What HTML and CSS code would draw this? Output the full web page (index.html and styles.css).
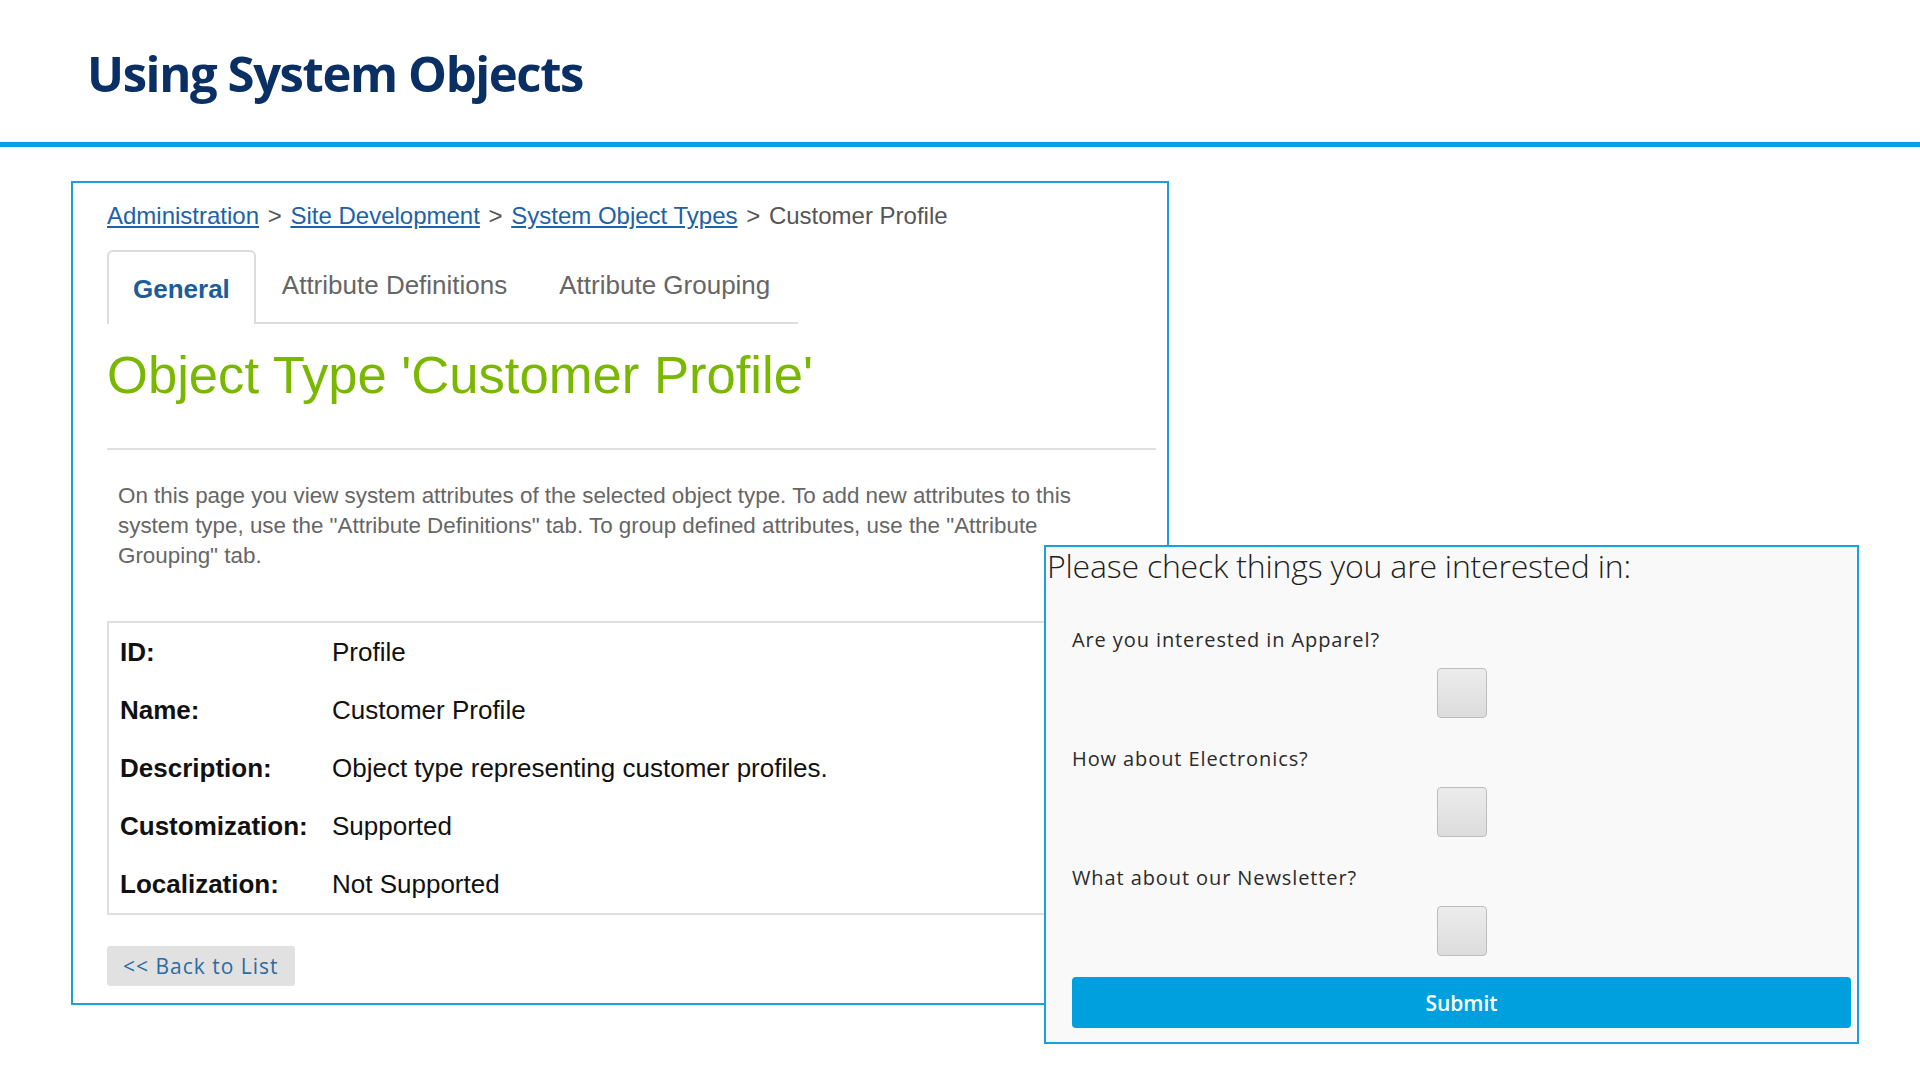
FILE: index.html
```html
<!DOCTYPE html>
<html lang="en">
<head>
  <meta charset="UTF-8" />
  <meta name="viewport" content="width=device-width, initial-scale=1.0"/>
  <title>Using System Objects</title>
  <link rel="stylesheet" href="styles.css">
</head>
<body>

  <header class="slide-header">
    <h1>Using System Objects</h1>
  </header>

  <main class="slide">

    <!-- Business Manager: system object type page -->
    <section class="admin-panel">
      <nav class="breadcrumb">
        <a href="#">Administration</a> <span class="sep">&gt;</span>
        <a href="#">Site Development</a> <span class="sep">&gt;</span>
        <a href="#">System Object Types</a> <span class="sep">&gt;</span>
        <span>Customer Profile</span>
      </nav>

      <ul class="tabs">
        <li class="active">General</li>
        <li>Attribute Definitions</li>
        <li>Attribute Grouping</li>
      </ul>

      <h2 class="page-title">Object Type 'Customer Profile'</h2>
      <hr class="divider">

      <p class="intro">
        On this page you view system attributes of the selected object type. To add new attributes to this<br>
        system type, use the "Attribute Definitions" tab. To group defined attributes, use the "Attribute<br>
        Grouping" tab.
      </p>

      <div class="details">
        <div class="row"><span class="key">ID:</span><span>Profile</span></div>
        <div class="row"><span class="key">Name:</span><span>Customer Profile</span></div>
        <div class="row"><span class="key">Description:</span><span>Object type representing customer profiles.</span></div>
        <div class="row"><span class="key">Customization:</span><span>Supported</span></div>
        <div class="row"><span class="key">Localization:</span><span>Not Supported</span></div>
      </div>

      <button type="button" class="back-btn">&lt;&lt; Back to List</button>
    </section>

    <!-- Storefront form using the custom attributes -->
    <form class="interest-form">
      <h3>Please check things you are interested in:</h3>
      <div class="form-body">
        <div class="field">
          <label for="apparel">Are you interested in Apparel?</label>
          <input type="checkbox" id="apparel" name="apparel">
        </div>
        <div class="field">
          <label for="electronics">How about Electronics?</label>
          <input type="checkbox" id="electronics" name="electronics">
        </div>
        <div class="field">
          <label for="newsletter">What about our Newsletter?</label>
          <input type="checkbox" id="newsletter" name="newsletter">
        </div>
        <button type="submit" class="submit-btn">Submit</button>
      </div>
    </form>

  </main>

</body>
</html>
```

FILE: styles.css
```css
* {
  margin: 0;
  padding: 0;
  box-sizing: border-box;
}

body {
  background: #ffffff;
  width: 1920px;
  height: 1080px;
  overflow: hidden;
  font-family: 'Liberation Sans', Arial, sans-serif;
}

/* slide title */
.slide-header {
  height: 147px;
  padding: 43px 0 0 87px;
  border-bottom: 5px solid #00a3e0;
}

.slide-header h1 {
  font-family: 'Open Sans', sans-serif;
  font-weight: 700;
  font-size: 49px;
  line-height: 60px;
  letter-spacing: -1.4px;
  color: #0a2f64;
}

.slide {
  position: relative;
  padding: 34px 0 0 71px;
}

/* left screenshot */
.admin-panel {
  width: 1098px;
  border: 2px solid #1ba0dc;
  padding: 18px 11px 17px 34px;
}

.breadcrumb {
  font-size: 24px;
  line-height: 30px;
  color: #555;
}

.breadcrumb a {
  color: #1d62a6;
  text-decoration: underline;
}

.breadcrumb .sep {
  margin: 0 2px;
}

.tabs {
  list-style: none;
  display: flex;
  width: 691px;
  margin-top: 19px;
  border-bottom: 2px solid #dcdcdc;
}

.tabs li {
  font-size: 26px;
  line-height: 66px;
  padding: 0 24px 4px;
  color: #666;
  border: 2px solid transparent;
  border-bottom: none;
}

.tabs li.active {
  color: #1b5d9c;
  font-weight: bold;
  padding: 4px 24px 0;
  background: #fff;
  border-color: #dcdcdc;
  border-radius: 6px 6px 0 0;
  margin-bottom: -2px;
  height: 74px;
}

.page-title {
  margin-top: 21px;
  font-size: 52.6px;
  line-height: 60px;
  font-weight: normal;
  color: #7ab800;
}

.divider {
  margin-top: 43px;
  border: none;
  border-top: 2px solid #e0e0e0;
}

.intro {
  margin-top: 31px;
  padding-left: 11px;
  font-size: 22.4px;
  line-height: 30px;
  color: #666;
}

.details {
  margin-top: 50px;
  border: 2px solid #dedede;
  padding-left: 11px;
}

.details .row {
  display: flex;
  height: 58px;
  line-height: 58px;
  font-size: 26px;
  color: #111;
}

.details .key {
  width: 212px;
  font-weight: bold;
}

.back-btn {
  display: block;
  margin-top: 31px;
  height: 40px;
  padding: 0 16px;
  border: none;
  border-radius: 3px;
  background: #e1e1e1;
  font-family: 'Open Sans', sans-serif;
  font-size: 21px;
  letter-spacing: 1px;
  color: #2d6ca2;
}

/* right screenshot, pasted over the left one */
.interest-form {
  position: absolute;
  left: 1044px;
  top: 398px;
  width: 815px;
  background: #f9f9f9;
  border: 2px solid #1ba0dc;
  font-family: 'Open Sans', sans-serif;
}

.interest-form h3 {
  margin: 1px 0 0 1px;
  font-size: 32px;
  line-height: 36px;
  font-weight: 300;
  letter-spacing: -0.2px;
  color: #1e1e1e;
}

.form-body {
  padding: 43px 6px 14px 26px;
}

.field {
  margin-bottom: 28px;
}

.field label {
  display: block;
  font-size: 20px;
  line-height: 26px;
  letter-spacing: 0.9px;
  color: #2b2b2b;
}

.field input[type="checkbox"] {
  appearance: none;
  -webkit-appearance: none;
  display: block;
  width: 50px;
  height: 50px;
  margin: 15px auto 0;
  border: 1px solid #bdbdbd;
  border-radius: 4px;
  background: linear-gradient(#ececec, #dcdcdc);
}

.submit-btn {
  display: block;
  width: 100%;
  height: 51px;
  margin-top: -7px;
  border: none;
  border-radius: 4px;
  background: #00a0df;
  color: #fff;
  font-family: 'Open Sans', sans-serif;
  font-size: 21px;
  font-weight: 600;
}
```
